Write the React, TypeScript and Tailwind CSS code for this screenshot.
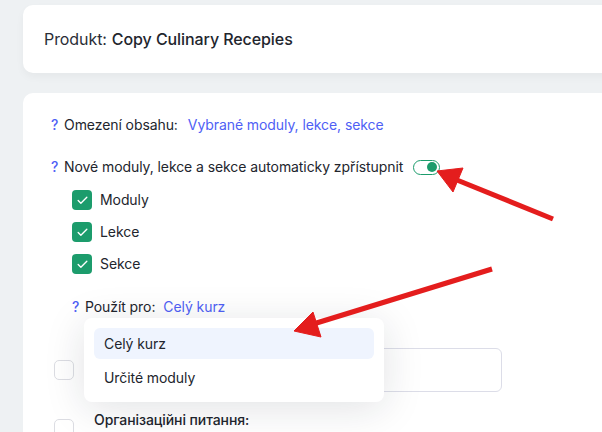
import { Check } from 'lucide-react';

// Settings panel: product header, access rules and the "apply to" select
const links = 'text-[#4f5ff5]';

const Help = () => <span className={`${links} mr-[6px] w-[7px] font-medium`}>?</span>;

const Checkbox = ({ checked }: { checked?: boolean }) =>
  checked ? (
    <span className="flex h-[20px] w-[20px] shrink-0 items-center justify-center rounded-[4px] bg-[#1c9c6c]">
      <Check size={13} strokeWidth={2.5} className="text-white" />
    </span>
  ) : (
    <span className="block h-[20px] w-[20px] shrink-0 rounded-[5px] border border-[#dcdde3] bg-white" />
  );

const Toggle = () => (
  <span className="ml-[10px] flex h-[15px] w-[27px] items-center justify-end rounded-full border-[1.5px] border-[#1c9c6c] pr-[2px]">
    <span className="h-[10px] w-[10px] rounded-full bg-[#1c9c6c]" />
  </span>
);

const Arrows = () => (
  <svg className="pointer-events-none absolute left-0 top-0" width="602" height="432">
    <g fill="#e41d1d" stroke="#e41d1d">
      <line x1="553" y1="219" x2="452" y2="178" strokeWidth="5" />
      <polygon points="437,171 463,168 453,192" strokeWidth="1" />
      <line x1="492" y1="269" x2="310" y2="325" strokeWidth="5" />
      <polygon points="294,331 313,312 321,337" strokeWidth="1" />
    </g>
  </svg>
);

export default function App() {
  return (
    <div className="relative h-[432px] w-[602px] overflow-hidden bg-[#eef1f3] pl-[23px] pt-[5px] font-['Inter','Noto_Sans',sans-serif] text-[14px] tracking-[-0.08px] text-[#22252d]">
      {/* Product header */}
      <div className="flex h-[68px] w-[640px] items-center rounded-[10px] bg-white px-[21px] text-[16px] shadow-[0_4px_8px_rgba(0,0,0,0.04)]">
        <span className="text-[#2a2e37]">Produkt:</span>
        <span className="ml-[5px] font-medium">Copy Culinary Recepies</span>
      </div>

      {/* Access settings */}
      <div className="relative mt-[20px] h-[400px] w-[640px] rounded-[10px] bg-white pl-[28px] pt-[22px]">
        <div className="flex h-[20px] items-center leading-[20px]">
          <Help />
          <span>Omezení obsahu:</span>
          <span className={`${links} ml-[10px]`}>Vybrané moduly, lekce, sekce</span>
        </div>

        <div className="mt-[22px] flex h-[20px] items-center leading-[20px]">
          <Help />
          <span>Nové moduly, lekce a sekce automaticky zpřístupnit</span>
          <Toggle />
        </div>

        <div className="ml-[21px] mt-[13px] flex flex-col gap-[12px]">
          {['Moduly', 'Lekce', 'Sekce'].map((label) => (
            <label key={label} className="flex h-[20px] items-center gap-[8px] leading-[20px]">
              <Checkbox checked />
              <span>{label}</span>
            </label>
          ))}
        </div>

        <div className="ml-[21px] mt-[23px] flex h-[20px] items-center leading-[20px]">
          <Help />
          <span>Použít pro:</span>
          <span className={`${links} ml-[8px]`}>Celý kurz</span>
        </div>

        <div className="ml-[3px] mt-[31px] flex items-center gap-[20px]">
          <Checkbox />
          <div className="h-[44px] w-[408px] rounded-[6px] border border-[#dcdde8]" />
        </div>

        <div className="ml-[3px] mt-[18px] flex items-start gap-[20px]">
          <span className="mt-[9px]">
            <Checkbox />
          </span>
          <span className="font-medium leading-[20px]">Організаційні питання:</span>
        </div>

        {/* Open select menu */}
        <div className="absolute left-[61px] top-[225px] flex w-[300px] flex-col gap-[3px] rounded-[8px] bg-white p-[10px] shadow-[0_6px_40px_rgba(20,30,50,0.13)]">
          <div className="flex h-[31px] items-center rounded-[6px] bg-[#eff4fe] px-[10px]">Celý kurz</div>
          <div className="flex h-[30px] items-center rounded-[6px] px-[10px]">Určité moduly</div>
        </div>
      </div>

      <Arrows />
    </div>
  );
}
